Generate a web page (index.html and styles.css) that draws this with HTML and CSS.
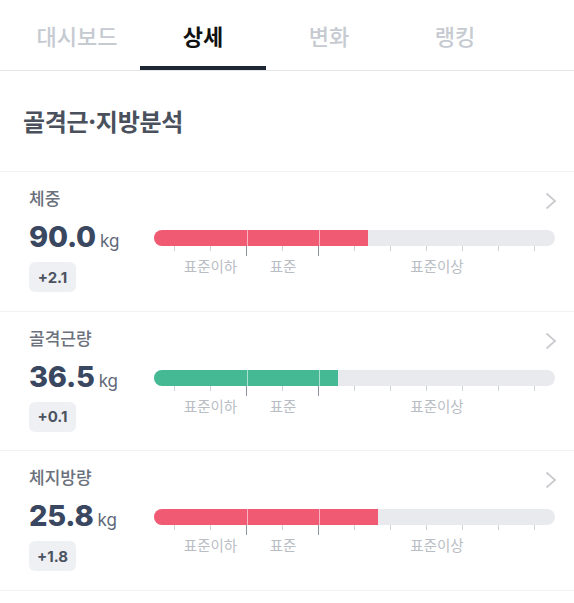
FILE: index.html
```html
<!DOCTYPE html>
<html lang="ko">
<head>
<meta charset="utf-8">
<link rel="stylesheet" href="styles.css">
</head>
<body>
<nav class="tabs">
  <div class="tab">대시보드</div>
  <div class="tab active">상세</div>
  <div class="tab">변화</div>
  <div class="tab">랭킹</div>
</nav>
<section class="title-row"><h1 class="title">골격근·지방분석</h1></section>

<div class="card">
  <div class="head">
    <span class="label">체중</span>
    <svg class="chev" width="12" height="18" viewBox="0 0 12 18"><polyline points="1.5,1.5 10,9 1.5,16.5" fill="none" stroke="#c9cbcf" stroke-width="1.8"/></svg>
  </div>
  <div class="body">
    <div class="left">
      <div class="value"><span class="num">90.0</span><span class="unit">kg</span></div>
      <div class="badge">+2.1</div>
    </div>
    <div class="scale">
      <div class="bar"><div class="fill red" style="width:53.4%"></div><span class="div d1"></span><span class="div d2"></span></div>
      <div class="ticks"><i></i><i></i><i class="long"></i><i></i><i class="long"></i><i></i><i></i><i></i><i></i><i></i><i></i></div>
      <div class="labels"><span class="l1">표준이하</span><span class="l2">표준</span><span class="l3">표준이상</span></div>
    </div>
  </div>
</div>

<div class="card">
  <div class="head">
    <span class="label">골격근량</span>
    <svg class="chev" width="12" height="18" viewBox="0 0 12 18"><polyline points="1.5,1.5 10,9 1.5,16.5" fill="none" stroke="#c9cbcf" stroke-width="1.8"/></svg>
  </div>
  <div class="body">
    <div class="left">
      <div class="value"><span class="num">36.5</span><span class="unit">kg</span></div>
      <div class="badge">+0.1</div>
    </div>
    <div class="scale">
      <div class="bar"><div class="fill green" style="width:45.9%"></div><span class="div d1"></span><span class="div d2"></span></div>
      <div class="ticks"><i></i><i></i><i class="long"></i><i></i><i class="long"></i><i></i><i></i><i></i><i></i><i></i><i></i></div>
      <div class="labels"><span class="l1">표준이하</span><span class="l2">표준</span><span class="l3">표준이상</span></div>
    </div>
  </div>
</div>

<div class="card">
  <div class="head">
    <span class="label">체지방량</span>
    <svg class="chev" width="12" height="18" viewBox="0 0 12 18"><polyline points="1.5,1.5 10,9 1.5,16.5" fill="none" stroke="#c9cbcf" stroke-width="1.8"/></svg>
  </div>
  <div class="body">
    <div class="left">
      <div class="value"><span class="num">25.8</span><span class="unit">kg</span></div>
      <div class="badge">+1.8</div>
    </div>
    <div class="scale">
      <div class="bar"><div class="fill red" style="width:55.9%"></div><span class="div d1"></span><span class="div d2"></span></div>
      <div class="ticks"><i></i><i></i><i class="long"></i><i></i><i class="long"></i><i></i><i></i><i></i><i></i><i></i><i></i></div>
      <div class="labels"><span class="l1">표준이하</span><span class="l2">표준</span><span class="l3">표준이상</span></div>
    </div>
  </div>
</div>
</body>
</html>
```

FILE: styles.css
```css
* { box-sizing: border-box; }
html, body { margin: 0; padding: 0; background: #fff; }
body {
  width: 574px;
  font-family: "Noto Sans CJK KR", "Noto Sans", sans-serif;
  color: #333;
}
.tabs {
  display: flex;
  height: 71px;
  padding-left: 14px;
  border-bottom: 1px solid #e4e6ea;
}
.tab {
  width: 126px;
  height: 70px;
  padding-top: 4px;
  border-bottom: 4px solid transparent;
  display: flex;
  align-items: center;
  justify-content: center;
  font-size: 22px;
  font-weight: 500;
  color: #c6cad1;
}
.tab.active {
  color: #111;
  font-weight: 700;
  border-bottom-color: #1e2633;
}
.title-row {
  height: 101px;
  display: flex;
  align-items: center;
  padding-left: 23px;
  padding-bottom: 2px;
  border-bottom: 1px solid #f1f2f4;
}
.title {
  margin: 0;
  font-size: 24px;
  font-weight: 700;
  color: #4a515d;
  letter-spacing: -0.3px;
}
.card {
  height: 139.5px;
  padding: 14px 19px 0 29px;
  border-bottom: 1px solid #f1f2f4;
}
.head {
  height: 24px;
  display: flex;
  align-items: center;
  justify-content: space-between;
}
.label {
  font-size: 17px;
  font-weight: 500;
  color: #6b717c;
  line-height: 24px;
}
.chev { margin-top: 6px; margin-right: -2px; }
.body {
  display: flex;
  margin-top: 8px;
}
.left { width: 125px; }
.value {
  height: 38px;
  display: flex;
  align-items: baseline;
  line-height: 38px;
}
.num {
  font-family: Inter, "Liberation Sans", sans-serif;
  font-size: 29px;
  font-weight: 800;
  color: #3a4760;
  letter-spacing: -0.2px;
}
.unit {
  font-family: Inter, "Liberation Sans", sans-serif;
  font-size: 17px;
  font-weight: 400;
  color: #5f6878;
  margin-left: 4px;
}
.badge {
  margin-top: 6px;
  width: 47px;
  height: 30px;
  border-radius: 6px;
  background: #eef0f3;
  display: flex;
  align-items: center;
  justify-content: center;
  font-family: Inter, "Liberation Sans", sans-serif;
  font-size: 15px;
  font-weight: 700;
  color: #4b5361;
}
.scale { width: 401px; }
.bar {
  position: relative;
  margin-top: 12px;
  height: 16px;
  border-radius: 8px;
  background: #e8eaee;
  overflow: hidden;
}
.fill { height: 100%; }
.fill.red { background: #f15a73; }
.fill.green { background: #45b994; }
.div {
  position: absolute;
  top: 0;
  width: 1px;
  height: 100%;
  background: rgba(255,255,255,0.55);
}
.d1 { left: 92.5px; }
.d2 { left: 164.5px; }
.ticks {
  height: 10px;
  display: flex;
  justify-content: space-between;
  align-items: flex-start;
  padding: 0 20px;
}
.ticks i {
  display: block;
  width: 1px;
  height: 5px;
  background: #cfd2d7;
}
.ticks i.long {
  height: 10px;
  background: #8d949f;
}
.labels {
  display: flex;
  margin-top: 0;
  padding-left: 20px;
  font-size: 14.5px;
  line-height: 20px;
  color: #b9bdc4;
}
.labels span { text-align: center; }
.l1 { width: 73px; }
.l2 { width: 72px; }
.l3 { flex: 1; }
```
